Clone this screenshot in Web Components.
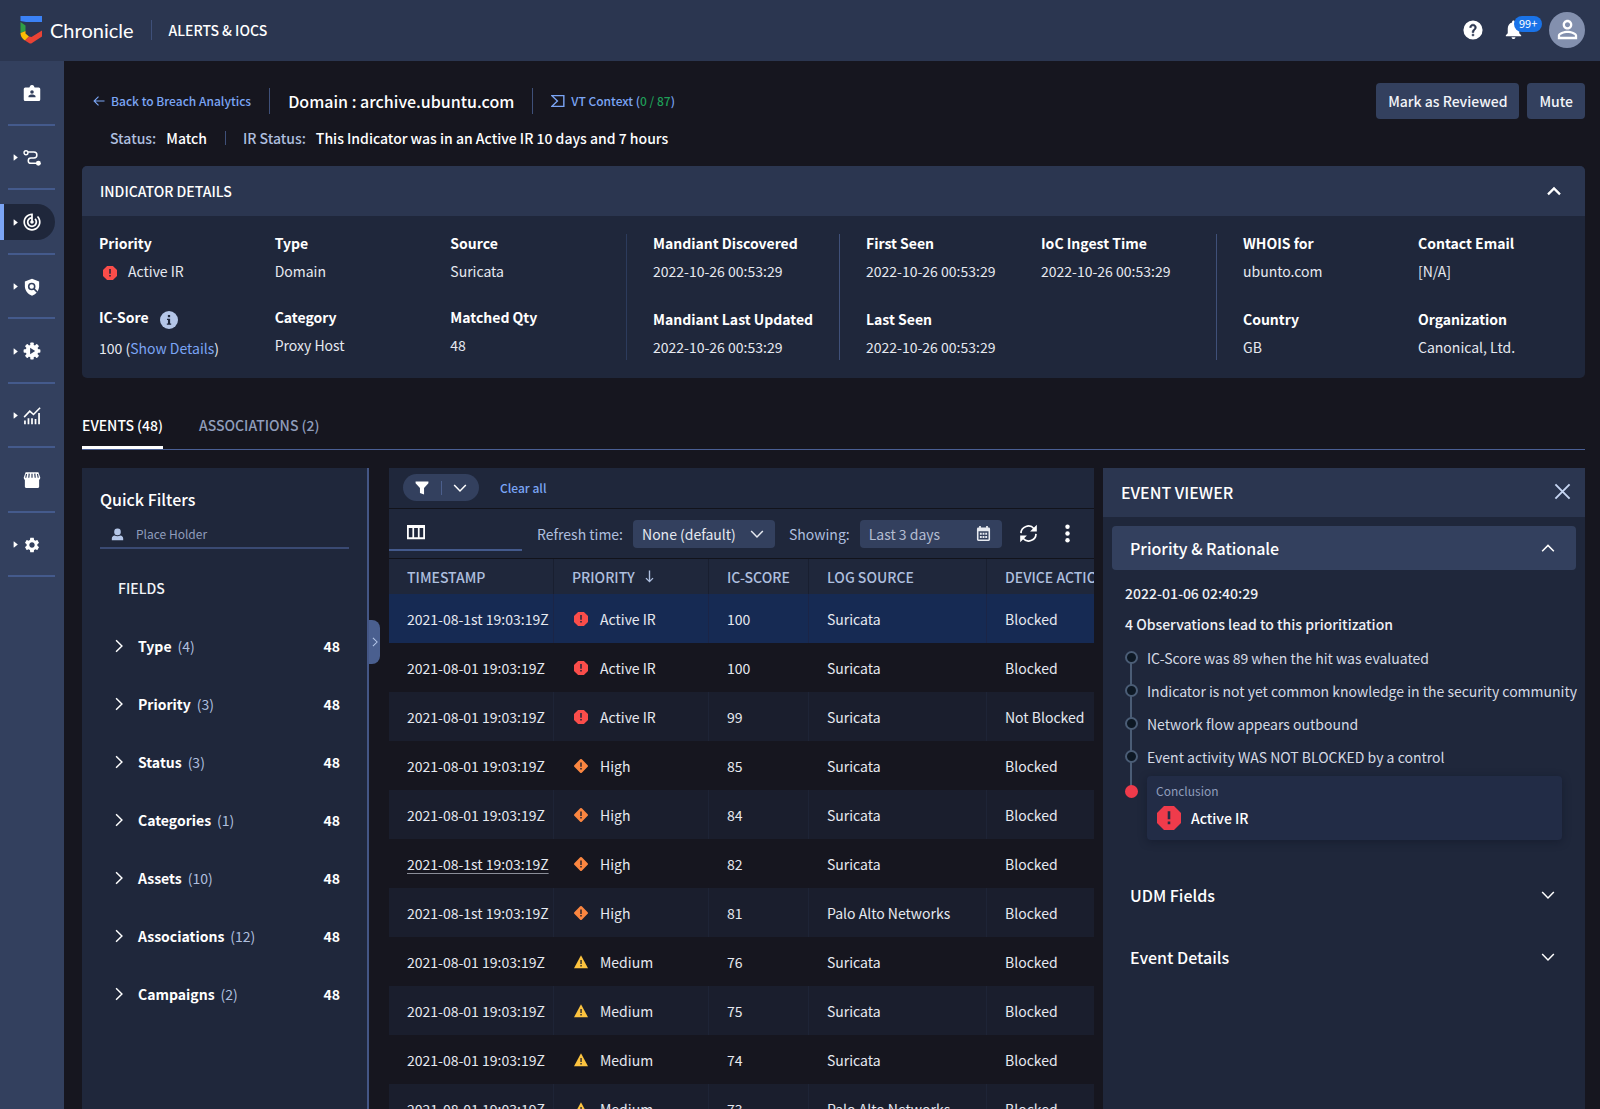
<!DOCTYPE html>
<html lang="en">
<head>
<meta charset="utf-8">
<title>Chronicle - Alerts &amp; IOCs</title>
<style>
  html, body { margin: 0; height: 100%; background: #16161f; }
  body {
    --bar: #2b3650; --rail: #33405e; --panel: #1f273b; --raised: #33405e; --line: #3f5079;
    --link: #7ba5f5; --muted: #aebfdf; --text: #e6e9f0; --bg: #16161f;
    font-family: "Noto Sans CJK SC", "Noto Sans", sans-serif;
    font-size: 14px; line-height: 20px; color: var(--text);
  }
</style>
</head>
<body>
<chronicle-app></chronicle-app>
<script>
const base = `
  *, *::before, *::after { box-sizing: border-box; }
  button, input, select { font: inherit; color: inherit; background: none; border: 0; margin: 0; padding: 0; border-radius: 0; outline: 0; }
  button { cursor: pointer; display: inline-flex; align-items: center; }
  a { color: var(--link); text-decoration: none; }
  h1, h2, h3, p, ul, ol, dl, dd, dt { margin: 0; padding: 0; font-size: inherit; font-weight: inherit; list-style: none; }
`;
function define(name, css, html) {
  customElements.define(name, class extends HTMLElement {
    constructor() {
      super();
      this.attachShadow({ mode: 'open' });
      const t = document.createElement('template');
      t.innerHTML = `<style>${base}${css}</style>` + (typeof html === 'function' ? html(this) : html);
      this.shadowRoot.append(t.content.cloneNode(true));
    }
  });
}

const teeth = [0, 45, 90, 135, 180, 225, 270, 315]
  .map(a => `<rect x="9.7" y="0.8" width="4.6" height="6" rx="1" transform="rotate(${a} 12 12)"/>`).join('');
const stroke = (d, w) => `<path d="${d}" fill="none" stroke="currentColor" stroke-width="${w}"/>`;
const icons = {
  badge: `<path fill-rule="evenodd" d="M8.500 4.500 9.500 2.500Q10 1.200 12 1.200T14.500 2.500L15.500 4.500H21q2 0 2 2V20.500q0 2-2 2H3q-2 0-2-2V6.500q0-2 2-2ZM12 8.200a2.400 2.400 0 1 0 0 4.800 2.400 2.400 0 0 0 0-4.800ZM7.300 17.500h9.400v-1.300c0-1.500-3-2.300-4.700-2.300s-4.700.8-4.700 2.300Z"/>`,
  route: `<circle cx="4" cy="5" r="2.600" fill="none" stroke="currentColor" stroke-width="1.900"/>` + stroke('M6.800 4H14.500a4 4 0 0 1 0 8H10.500a3.500 3.500 0 0 0 0 7H19', 2) + `<circle cx="20.500" cy="19" r="3.300"/>`,
  radar: `<path d="M19.070 4.930l-1.410 1.410C19.100 7.790 20 9.790 20 12c0 4.420-3.580 8-8 8s-8-3.580-8-8c0-4.080 3.050-7.440 7-7.930v2.020C8.160 6.570 6 9.030 6 12c0 3.310 2.690 6 6 6s6-2.690 6-6c0-1.660-.67-3.160-1.760-4.240l-1.410 1.410C15.550 9.900 16 10.900 16 12c0 2.210-1.790 4-4 4s-4-1.790-4-4c0-1.860 1.280-3.410 3-3.860v2.140c-.6.35-1 .98-1 1.720 0 1.100.9 2 2 2s2-.9 2-2c0-.74-.4-1.380-1-1.720V2h-1C6.480 2 2 6.480 2 12s4.480 10 10 10 10-4.480 10-10c0-2.760-1.120-5.260-2.930-7.070z" transform="translate(-1.800 -1.800) scale(1.150)"/>`,
  shield: `<path d="M12 1 21.500 4.500V11c0 5.700-4 10.500-9.500 12.500C6.500 21.500 2.500 16.700 2.500 11V4.500Z"/><g fill="none" stroke="var(--rail)" stroke-width="2.100"><circle cx="11.600" cy="11.400" r="4"/><path d="m14.400 14.200 4.600 4.600"/></g>`,
  automation: `<circle cx="12" cy="12" r="8.500"/>${teeth}<path d="M9.500 7.800 16.200 12l-6.700 4.200Z" fill="var(--rail)"/>`,
  chart: stroke('m1.500 13.500 7.500-8 5 4.500 8.800-9', 2.1) + stroke('M2.600 23v-5M7.300 23v-8M12 23v-8M16.700 23v-7M21.400 23V8', 2.3),
  store: `<path d="M3.500 1.500h17L23 8.500c0 1.600-.6 2.700-1.500 3.200V21q0 1.500-1.500 1.500H4q-1.500 0-1.500-1.500v-9.300C1.600 11.200 1 10.100 1 8.500Z"/><g fill="none" stroke="var(--rail)" stroke-width="1.600"><path d="M8.300 3.500 7.700 9M12 3.500V9M15.700 3.500l.6 5.500M4.700 4 3.700 9M19.300 4l1 5"/></g>`,
  settings: `<path d="M19.140 12.940c.04-.3.06-.61.06-.94 0-.32-.02-.64-.07-.94l2.030-1.580c.18-.14.23-.41.12-.61l-1.920-3.320c-.12-.22-.37-.29-.59-.22l-2.390.96c-.5-.38-1.030-.7-1.620-.94l-.36-2.540c-.04-.24-.24-.41-.48-.41h-3.840c-.24 0-.43.17-.47.41l-.36 2.540c-.59.24-1.130.57-1.620.94l-2.390-.96c-.22-.08-.47 0-.59.22L2.740 8.870c-.12.21-.08.47.12.61l2.030 1.580c-.05.3-.09.63-.09.94s.02.64.07.94l-2.030 1.580c-.18.14-.23.41-.12.61l1.920 3.320c.12.22.37.29.59.22l2.390-.96c.5.38 1.030.7 1.620.94l.36 2.540c.05.24.24.41.48.41h3.840c.24 0 .44-.17.47-.41l.36-2.540c.59-.24 1.130-.56 1.620-.94l2.390.96c.22.08.47 0 .59-.22l1.920-3.320c.12-.22.07-.47-.12-.61l-2.010-1.580zM12 15.600c-1.980 0-3.600-1.620-3.600-3.600s1.620-3.600 3.600-3.600 3.600 1.620 3.600 3.600-1.620 3.600-3.600 3.600z"/>`,
  help: `<path d="M12 0.500a11.500 11.500 0 1 0 0 23 11.500 11.500 0 0 0 0-23z"/><path fill="var(--bar)" stroke="var(--bar)" stroke-width=".7" d="M13 19h-2v-2h2v2zm2.070-7.750l-.9.920C13.450 12.900 13 13.500 13 15h-2v-.5c0-1.100.45-2.100 1.170-2.830l1.240-1.260c.37-.36.59-.86.59-1.410 0-1.100-.9-2-2-2s-2 .9-2 2H8c0-2.210 1.790-4 4-4s4 1.790 4 4c0 .88-.36 1.680-.93 2.250z"/>`,
  bell: `<path d="M12 22c1.100 0 2-.9 2-2h-4c0 1.100.89 2 2 2zm6-6v-5c0-3.070-1.640-5.640-4.500-6.320V4c0-.83-.67-1.500-1.500-1.500s-1.500.67-1.500 1.500v.68C7.630 5.360 6 7.920 6 11v5l-2 2v1h16v-1l-2-2z"/>`,
  person: `<path d="M12 5.900c1.160 0 2.100.94 2.100 2.100s-.94 2.100-2.100 2.100S9.900 9.160 9.900 8s.94-2.100 2.100-2.100m0 9c2.970 0 6.100 1.460 6.100 2.100v1.100H5.900V17c0-.64 3.130-2.100 6.100-2.100M12 4C9.790 4 8 5.790 8 8s1.790 4 4 4 4-1.790 4-4-1.790-4-4-4zm0 9c-2.670 0-8 1.340-8 4v3h16v-3c0-2.660-5.330-4-8-4z"/>`,
  user: `<rect x="6" y="1" width="12" height="12.500" rx="5.500"/><path d="M1.500 22.500v-3c0-3 2.500-5 5-5.500q5.500 2 11 0c2.500.5 5 2.500 5 5.500v3Z"/>`,
  caret: `<path d="M5.500 2.500v19q0 1.500 1.500.5L19 13q1-1 0-2L7 2Q5.500 1 5.500 2.500Z"/>`,
  back: stroke('M23 12H2.500M11 3.200 2.200 12l8.800 8.800', 2.2),
  vt: stroke('M1.500 2.800H22V21.200H1.500L11 12Z', 2.4),
  up: stroke('m4 16.500 8-8 8 8', 3),
  upthin: stroke('m2 17.500 10-10 10 10', 2.6),
  down: stroke('m2 7 10 10L22 7', 2.6),
  right: stroke('m7 2 10 10L7 22', 2.5),
  close: stroke('m2 2 20 20M22 2 2 22', 2.7),
  info: `<circle cx="12" cy="12" r="12"/><g fill="var(--panel)"><rect x="10.500" y="5.300" width="3" height="3"/><path d="M9.300 10.200h4.200v6.300h1.400v1.800H9.100v-1.800h1.500v-4.500H9.300Z"/></g>`,
  funnel: `<path d="M1 1h22v2.800l-7.500 8.200V23L8.500 20.500V12L1 3.800Z"/>`,
  columns: `<path fill-rule="evenodd" d="M0 2.500h24v19H0ZM2.400 6.500v12.600H7.200V6.500ZM9.500 6.500v12.600h5V6.500ZM16.800 6.500v12.600h4.800V6.500Z"/>`,
  calendar: `<path fill-rule="evenodd" d="M5 0h2.800v2.500h8.400V0H19v2.500h1.200q2.300 0 2.300 2.300v16.900q0 2.300-2.300 2.300H3.800q-2.300 0-2.300-2.300V4.800q0-2.300 2.300-2.300H5ZM4 8.500V21.500H20V8.500Z"/><path d="M6.200 10.800h3v3h-3ZM10.500 10.800h3v3h-3ZM14.800 10.800h3v3h-3ZM6.200 16h3v3h-3ZM10.500 16h3v3h-3ZM14.800 16h3v3h-3Z"/>`,
  refresh: stroke('M2.500 11.500A9.300 9.300 0 0 1 19 6M21.500 12.500A9.300 9.300 0 0 1 5 18', 2.1) + `<path d="M22.500 1v8.500H14ZM1.500 23v-8.500H10Z"/>`,
  dots: `<circle cx="12" cy="3.500" r="2.800"/><circle cx="12" cy="12" r="2.800"/><circle cx="12" cy="20.500" r="2.800"/>`,
  sort: stroke('M12 1v20M5.500 15l6.500 6.500 6.500-6.500', 2.5),
  active: `<path fill="var(--alert, #fa4d4a)" d="M7 0h10l7 7v10l-7 7H7l-7-7V7Z"/><path fill="var(--cut, #1f273b)" d="M10.700 5.300h2.600v8h-2.600ZM10.700 15.500h2.600V18.200h-2.600Z"/>`,
  high: `<path fill="#fb8640" d="M12 0q.8 0 1.400.6l10 10q1.200 1.400 0 2.800l-10 10q-1.400 1.200-2.800 0l-10-10q-1.200-1.400 0-2.800l10-10Q11.200 0 12 0Z"/><path fill="#1b1e2c" d="M10.800 6h2.400v7.500h-2.400ZM10.800 15.500h2.400V18h-2.400Z"/>`,
  medium: `<path fill="#fcc33f" d="M12 .5 24 22.500H0Z"/><path fill="#1b1e2c" d="M11 8.500h2.200v7H11ZM11 17.300h2.200v2.300H11Z"/>`
};
customElements.define('c-icon', class extends HTMLElement {
  constructor() {
    super();
    this.attachShadow({ mode: 'open' });
  }
  connectedCallback() {
    const s = this.getAttribute('size') || 20;
    this.shadowRoot.innerHTML = `<style>:host{display:inline-flex;flex:none}svg{display:block;fill:currentColor}</style>
      <svg width="${s}" height="${s}" viewBox="0 0 24 24" aria-hidden="true">${icons[this.getAttribute('name')]}</svg>`;
  }
});

define('action-button', `
  :host { display: inline-flex; }
  button { height: 36px; padding: 0 12px; border-radius: 4px; background: var(--raised); font-size: 14px; font-weight: 500; color: #f2f4f8; }
`, `<button type="button"><slot></slot></button>`);

define('v-rule', `
  :host { display: block; width: 1px; background: var(--line); flex: none; }
`, ``);

define('top-bar', `
  :host { display: flex; box-sizing: border-box; align-items: center; height: 61px; padding: 0 15px 2px 20px; background: var(--bar); color: #fff; }
  .brand { font: 400 20px/28px Lato, sans-serif; margin-left: 7px; }
  v-rule { height: 20px; margin: 0 17px; }
  h1 { font-weight: 500; }
  .end { margin-left: auto; display: flex; align-items: center; }
  .bell { position: relative; margin: 0 24px 0 19px; }
  .count { position: absolute; left: 12px; top: -2px; height: 16px; padding: 0 5px; border-radius: 8px; background: #1a73e8; font-size: 11px; line-height: 15px; }
  .avatar { width: 36px; height: 36px; border-radius: 50%; background: #8390ae; justify-content: center; }
`, `
  <svg width="23" height="28" viewBox="0 0 23 28" aria-hidden="true">
    <path fill="#3b82f6" d="M.5 0H22v6H6L.5 5Z"/>
    <path fill="#2f9e44" d="M.5 6 5.500 9.500V15L.5 17Z"/>
    <path fill="#fbbc04" d="M.5 17 5.500 15v2.500L9 20.500 5 24.500Q.5 22 .5 17Z"/>
    <path fill="#ea4335" d="M22 14.500V20.500L12 27Q10.500 28 9 27L5 24.500 9 20.500 11.500 21Z"/>
  </svg>
  <span class="brand">Chronicle</span><v-rule></v-rule><h1>ALERTS &amp; IOCS</h1>
  <div class="end">
    <button type="button" aria-label="Help"><c-icon name="help" size="20"></c-icon></button>
    <button type="button" class="bell" aria-label="Notifications"><c-icon name="bell" size="23"></c-icon><span class="count">99+</span></button>
    <button type="button" class="avatar" aria-label="Account"><c-icon name="person" size="29"></c-icon></button>
  </div>`);

const nav = [['badge', 0], ['route', 1], ['radar', 1], ['shield', 1], ['automation', 1], ['chart', 1], ['store', 0], ['settings', 1]];
define('side-rail', `
  :host { display: block; width: 64px; background: var(--rail); color: #fff; }
  nav { display: grid; grid-template-rows: repeat(8, 1fr); height: 516px; }
  .item { display: flex; flex-direction: column; justify-content: space-between; padding-top: 14px; }
  .item::after { content: ""; height: 2px; margin: 0 9px 0 8px; background: #445a8c; }
  button { width: 55px; height: 36px; justify-content: flex-end; gap: 4px; padding-right: 14px; }
  .on { background: var(--panel); border-radius: 0 18px 18px 0; border-left: 4px solid #7ba5f5; --rail: #1f273b; }
`, `<nav>${nav.map(([n, c]) => `<div class="item"><button type="button" aria-label="${n}"${n === 'radar' ? ' class="on"' : ''}>${c ? '<c-icon name="caret" size="7"></c-icon>' : ''}<c-icon name="${n}" size="18"></c-icon></button></div>`).join('')}</nav>`);

define('page-heading', `
  :host { display: block; padding: 22px 0 18px; }
  .row { display: flex; align-items: center; }
  .top { height: 36px; padding-left: 11px; }
  .top v-rule { height: 26px; margin: 0 18px; }
  .small { font-size: 12px; font-weight: 500; display: flex; align-items: center; gap: 6px; }
  .ok { color: #1e9e57; }
  h2 { font-size: 16px; font-weight: 500; color: #fff; }
  .acts { margin-left: auto; display: flex; gap: 8px; }
  .status { padding: 9px 0 0 28px; font-weight: 500; }
  .status v-rule { height: 14px; margin: 0 17px 0 18px; }
  .k { color: var(--muted); margin-right: 10px; }
  .v { color: #fff; }
`, `
  <div class="row top">
    <a class="small" href="#"><c-icon name="back" size="12"></c-icon>Back to Breach Analytics</a>
    <v-rule></v-rule><h2>Domain : archive.ubuntu.com</h2><v-rule></v-rule>
    <a class="small" href="#"><c-icon name="vt" size="14"></c-icon><span>VT Context (<span class="ok">0 / 87</span>)</span></a>
    <div class="acts"><action-button>Mark as Reviewed</action-button><action-button>Mute</action-button></div>
  </div>
  <div class="row status"><span class="k">Status:</span><span class="v">Match</span><v-rule></v-rule>
    <span class="k">IR Status:</span><span class="v">This Indicator was in an Active IR 10 days and 7 hours</span></div>`);

define('detail-field', `
  :host { display: block; line-height: 18px; white-space: nowrap; }
  .label { display: flex; gap: 11px; font-weight: 700; color: #fff; margin-bottom: 10px; }
  ::slotted(c-icon) { padding-top: 3px; color: #b4c6e8; }
  .value { display: flex; align-items: center; }
`, el => `<div class="label">${el.getAttribute('label')}<slot name="hint"></slot></div><div class="value"><slot></slot></div>`);

const stamp = '2022-10-26 00:53:29';
define('indicator-card', `
  :host { display: block; border-radius: 5px; overflow: hidden; background: var(--panel); }
  header { display: flex; align-items: center; justify-content: space-between; height: 50px; padding: 0 22px 0 18px; background: var(--bar); color: #fff; font-weight: 500; }
  .body { display: grid; grid-template-columns: 527fr 213fr 377fr 369fr; padding: 18px 0 18px 17px; }
  .group { display: grid; gap: 28px 0; padding: 0 0 3px 26px; border-left: 1px solid var(--line); align-items: start; grid-template-columns: 1fr 1fr; }
  .group:first-child { padding-left: 0; border: 0; grid-template-columns: repeat(3, 1fr); }
  .group:nth-child(2) { grid-template-columns: 1fr; border-color: #2c3b5c; }
  .group:last-child { grid-template-columns: 175fr 167fr; }
  .sev { margin: 0 11px 0 4px; }
`, `
  <header><h3>INDICATOR DETAILS</h3><button type="button" aria-label="Collapse"><c-icon name="up" size="18"></c-icon></button></header>
  <div class="body">
    <div class="group">
      <detail-field label="Priority"><c-icon class="sev" name="active" size="14"></c-icon>Active IR</detail-field>
      <detail-field label="Type">Domain</detail-field>
      <detail-field label="Source">Suricata</detail-field>
      <detail-field label="IC-Sore"><c-icon slot="hint" name="info" size="18"></c-icon><span>100 (<a href="#">Show Details</a>)</span></detail-field>
      <detail-field label="Category">Proxy Host</detail-field>
      <detail-field label="Matched Qty">48</detail-field>
    </div>
    <div class="group">
      <detail-field label="Mandiant Discovered">${stamp}</detail-field>
      <detail-field label="Mandiant Last Updated">${stamp}</detail-field>
    </div>
    <div class="group">
      <detail-field label="First Seen">${stamp}</detail-field>
      <detail-field label="IoC Ingest Time">${stamp}</detail-field>
      <detail-field label="Last Seen">${stamp}</detail-field>
    </div>
    <div class="group">
      <detail-field label="WHOIS for">ubunto.com</detail-field>
      <detail-field label="Contact Email">[N/A]</detail-field>
      <detail-field label="Country">GB</detail-field>
      <detail-field label="Organization">Canonical, Ltd.</detail-field>
    </div>
  </div>`);

define('page-tabs', `
  :host { display: flex; gap: 36px; height: 44px; margin-top: 28px; border-bottom: 1px solid #4a5f94; }
  button { font-weight: 500; color: #8f9dbb; padding-bottom: 3px; border-bottom: 3px solid transparent; }
  .on { color: #fff; border-color: #fff; }
`, `<button type="button" class="on">EVENTS (48)</button><button type="button">ASSOCIATIONS (2)</button>`);

const fields = [['Type', 4], ['Priority', 3], ['Status', 3], ['Categories', 1], ['Assets', 10], ['Associations', 12], ['Campaigns', 2]];
define('quick-filters', `
  :host { display: block; position: relative; background: var(--panel); border-right: 2px solid #445685; padding: 20px 18px 0; }
  h3 { font-size: 16px; line-height: 22px; font-weight: 500; color: #fff; }
  label { display: flex; align-items: center; gap: 12px; height: 28px; margin-top: 11px; padding-left: 11px; border-bottom: 2px solid #3a4a73; color: #b4c6e8; }
  input { flex: 1; min-width: 0; font-size: 12px; }
  input::placeholder { color: #8f9dbb; opacity: 1; }
  h4 { margin: 29px 0 19px 18px; font-size: 14px; font-weight: 500; color: #f2f4f8; }
  li button { display: flex; width: 100%; height: 58px; padding: 0 9px 0 12px; color: #fff; font-weight: 700; }
  li c-icon { margin-right: 12px; }
  .n { font-weight: 400; color: var(--muted); margin-left: 6px; }
  .t { margin-left: auto; }
  .grip { position: absolute; left: 100%; top: 152px; margin-left: 2px; width: 11px; height: 44px; background: #4a5f8f; border-radius: 0 8px 8px 0; color: #b4c6e8; justify-content: center; }
`, `
  <h3>Quick Filters</h3>
  <label><c-icon name="user" size="13"></c-icon><input type="text" placeholder="Place Holder" aria-label="Filter fields"></label>
  <h4>FIELDS</h4>
  <ul>${fields.map(([l, n]) => `<li><button type="button"><c-icon name="right" size="14"></c-icon>${l}<span class="n">(${n})</span><span class="t">48</span></button></li>`).join('')}</ul>
  <button type="button" class="grip" aria-label="Expand filters"><c-icon name="right" size="10"></c-icon></button>`);

define('events-toolbar', `
  :host { display: block; background: var(--panel); }
  .row { display: flex; align-items: center; }
  .one { height: 41px; padding: 0 14px 1px; border-bottom: 1px solid #12131b; }
  .pill { display: flex; align-items: center; height: 27px; width: 76px; padding: 0 12px; justify-content: space-between; border-radius: 14px; background: var(--raised); color: #fff; }
  .pill v-rule { height: 14px; background: #4c5f8d; }
  .one a { margin-left: 21px; font-size: 12px; font-weight: 500; }
  .two { height: 50px; border-bottom: 1px solid #12131b; color: var(--muted); }
  .view { flex: none; width: 133px; height: 35px; align-self: flex-end; padding: 0 0 2px 18px; margin: 0 15px 7px 0; border-bottom: 2px solid #445a8c; color: #fff; }
  .ctl { flex: none; position: relative; display: flex; align-items: center; height: 28px; width: 142px; margin: 0 14px 0 10px; border-radius: 4px; background: var(--raised); color: #e6e9f0; }
  .ctl select, .ctl input { appearance: none; width: 100%; height: 100%; padding: 0 30px 0 9px; }
  .ctl input { color: #b3bdd2; }
  .ctl c-icon { position: absolute; right: 11px; pointer-events: none; }
  .tail { margin-left: 3px; gap: 20px; color: #fff; display: flex; }
  .tail button:last-child { width: 20px; justify-content: center; }
  label { white-space: nowrap; }
`, `
  <div class="row one"><div class="pill"><button type="button" aria-label="Filter"><c-icon name="funnel" size="14"></c-icon></button><v-rule></v-rule><button type="button" aria-label="Filter menu"><c-icon name="down" size="14"></c-icon></button></div><a href="#">Clear all</a></div>
  <div class="row two">
    <button type="button" class="view" aria-label="Columns"><c-icon name="columns" size="18"></c-icon></button>
    <label for="refresh">Refresh time:</label>
    <span class="ctl"><select id="refresh"><option>None (default)</option></select><c-icon name="down" size="14"></c-icon></span>
    <label for="range">Showing:</label>
    <span class="ctl"><input id="range" type="text" value="Last 3 days"><c-icon name="calendar" size="15"></c-icon></span>
    <div class="tail"><button type="button" aria-label="Refresh"><c-icon name="refresh" size="19"></c-icon></button><button type="button" aria-label="More"><c-icon name="dots" size="19"></c-icon></button></div>
  </div>`);

const A = '2021-08-1st 19:03:19Z', B = '2021-08-01 19:03:19Z', S = 'Suricata', P = 'Palo Alto Networks';
const rows = [
  [A, 'active', 100, S], [B, 'active', 100, S], [B, 'active', 99, S, 'Not Blocked'], [B, 'high', 85, S], [B, 'high', 84, S],
  [A, 'high', 82, S], [A, 'high', 81, P], [B, 'medium', 76, S], [B, 'medium', 75, S], [B, 'medium', 74, S], [B, 'medium', 73, P]
];
const names = { active: 'Active IR', high: 'High', medium: 'Medium' };
define('events-table', `
  :host { display: block; overflow: hidden; }
  table { border-collapse: separate; border-spacing: 0; table-layout: fixed; width: 730px; min-width: 100%; }
  th, td { padding: 0 0 0 18px; text-align: left; white-space: nowrap; border-left: 1px solid rgba(40, 48, 72, .35); }
  th:first-child, td:first-child { border-left: 0; }
  th { height: 35px; background: var(--panel); color: var(--muted); font-weight: 500; border-color: #191f30; }
  td { height: 49px; }
  tbody tr:nth-child(odd) td { background: #1a1e2d; }
  tbody tr:nth-child(even) td { border-color: transparent; }
  tbody tr:first-child td { background: #162a53; border-color: #1b2547; }
  .p { display: flex; align-items: center; gap: 12px; padding-left: 2px; }
  .s { display: inline-flex; align-items: center; gap: 8px; }
  a { color: inherit; text-decoration: underline; text-decoration-color: #8b8e98; text-underline-offset: 3px; }
`, `
  <table>
    <colgroup><col style="width:164px"><col style="width:155px"><col style="width:100px"><col style="width:178px"><col></colgroup>
    <thead><tr><th>TIMESTAMP</th><th><span class="s">PRIORITY <c-icon name="sort" size="13"></c-icon></span></th><th>IC-SCORE</th><th>LOG SOURCE</th><th>DEVICE ACTION</th></tr></thead>
    <tbody>${rows.map(([t, p, s, l, d], i) => `<tr><td>${i === 5 ? `<a href="#">${t}</a>` : t}</td><td><span class="p"><c-icon name="${p}" size="14"></c-icon>${names[p]}</span></td><td>${s}</td><td>${l}</td><td>${d || 'Blocked'}</td></tr>`).join('')}</tbody>
  </table>`);

define('accordion-head', `
  :host { display: block; }
  button { width: 100%; height: 44px; padding: 0 21px 0 18px; justify-content: space-between; border-radius: 4px; font-size: 16px; font-weight: 500; color: #fff; }
  :host([open]) button { background: var(--raised); }
`, el => `<button type="button" aria-expanded="${el.hasAttribute('open')}"><span><slot></slot></span><c-icon name="${el.hasAttribute('open') ? 'upthin' : 'down'}" size="14"></c-icon></button>`);

define('rationale-timeline', `
  :host { display: block; padding: 13px 14px 0 13px; }
  .strong { font-weight: 500; line-height: 20px; margin-bottom: 11px; color: #eef0f5; }
  .strong + .strong { margin-bottom: 7px; }
  li { position: relative; display: flex; align-items: center; gap: 9px; height: 33px; white-space: nowrap; color: #d5dae5; }
  .dot { position: relative; flex: none; width: 13px; height: 13px; border: 2px solid #4b5d76; border-radius: 50%; background: #0d1824; }
  li:not(:last-child)::before { content: ""; position: absolute; left: 5px; top: 50%; width: 2px; height: 100%; background: #4b5d76; }
  li:last-child { align-items: flex-start; height: auto; }
  li:last-child .dot { background: #ef3b4b; border-color: #ef3b4b; margin-top: 12px; }
  .card { flex: 1; height: 64px; margin-top: 3px; padding: 6px 9px; border-radius: 4px; background: #222c46; box-shadow: 0 2px 8px rgba(10, 15, 28, .35); }
  .cap { font-size: 12px; line-height: 18px; color: #8f9dbb; }
  .res { display: flex; align-items: center; gap: 10px; height: 36px; font-weight: 500; color: #fff; --alert: #ef3b4b; --cut: #222c46; padding: 0 0 0 1px; }
`, `
  <p class="strong">2022-01-06 02:40:29</p><p class="strong">4 Observations lead to this prioritization</p>
  <ol>
    <li><span class="dot"></span>IC-Score was 89 when the hit was evaluated</li>
    <li><span class="dot"></span>Indicator is not yet common knowledge in the security community</li>
    <li><span class="dot"></span>Network flow appears outbound</li>
    <li><span class="dot"></span>Event activity WAS NOT BLOCKED by a control</li>
    <li><span class="dot"></span><div class="card"><div class="cap">Conclusion</div><div class="res"><c-icon name="active" size="24"></c-icon>Active IR</div></div></li>
  </ol>`);

define('event-viewer', `
  :host { display: block; background: var(--panel); }
  header { display: flex; align-items: center; justify-content: space-between; height: 49px; padding: 0 14px 2px 18px; background: var(--bar); font-size: 16px; font-weight: 500; color: #fff; }
  header button { color: #c6d5f2; }
  .body { padding: 9px; }
  .more { display: grid; gap: 18px; padding-top: 33px; }
`, `
  <header><h3>EVENT VIEWER</h3><button type="button" aria-label="Close"><c-icon name="close" size="17"></c-icon></button></header>
  <div class="body">
    <accordion-head open>Priority &amp; Rationale</accordion-head>
    <rationale-timeline></rationale-timeline>
    <div class="more"><accordion-head>UDM Fields</accordion-head><accordion-head>Event Details</accordion-head></div>
  </div>`);

define('chronicle-app', `
  :host { display: grid; grid-template: auto minmax(0, 1fr) / auto minmax(0, 1fr); height: 100vh; }
  top-bar { grid-column: 1 / -1; }
  main { display: flex; flex-direction: column; padding: 0 15px 0 18px; overflow: hidden; }
  .work { flex: 1; min-height: 0; display: grid; grid-template-columns: 287px minmax(0, 1fr) 482px; margin-top: 18px; }
  .events { margin: 0 9px 0 20px; overflow: hidden; }
`, `
  <top-bar></top-bar><side-rail></side-rail>
  <main>
    <page-heading></page-heading><indicator-card></indicator-card><page-tabs></page-tabs>
    <div class="work"><quick-filters></quick-filters><section class="events"><events-toolbar></events-toolbar><events-table></events-table></section><event-viewer></event-viewer></div>
  </main>`);
</script>
</body>
</html>
